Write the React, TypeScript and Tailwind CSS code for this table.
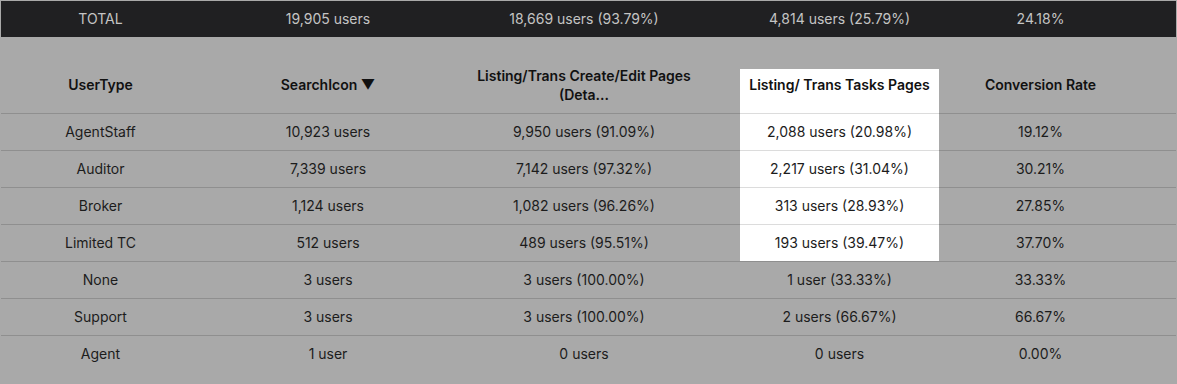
import React from "react";

type Row = {
  userType: string;
  search: string;
  listing: string;
  tasks: string;
  rate: string;
};

const rows: Array<Row> = [
  { userType: "AgentStaff", search: "10,923 users", listing: "9,950 users (91.09%)", tasks: "2,088 users (20.98%)", rate: "19.12%" },
  { userType: "Auditor", search: "7,339 users", listing: "7,142 users (97.32%)", tasks: "2,217 users (31.04%)", rate: "30.21%" },
  { userType: "Broker", search: "1,124 users", listing: "1,082 users (96.26%)", tasks: "313 users (28.93%)", rate: "27.85%" },
  { userType: "Limited TC", search: "512 users", listing: "489 users (95.51%)", tasks: "193 users (39.47%)", rate: "37.70%" },
  { userType: "None", search: "3 users", listing: "3 users (100.00%)", tasks: "1 user (33.33%)", rate: "33.33%" },
  { userType: "Support", search: "3 users", listing: "3 users (100.00%)", tasks: "2 users (66.67%)", rate: "66.67%" },
  { userType: "Agent", search: "1 user", listing: "0 users", tasks: "0 users", rate: "0.00%" },
];

// columns: 200 / 256 / 284 / 199 / rest
const cols = "grid grid-cols-[199px_256px_284px_199px_1fr]";

const App = () => {
  return (
    <div
      className="w-[1177px] h-[384px] bg-[#a9a9a9] px-px pt-px text-sm text-[#1c1c1c]"
      style={{ fontFamily: "Inter, 'Noto Sans', sans-serif" }}
    >
      {/* total bar */}
      <div className={`${cols} h-[36px] items-center bg-[#202022] text-[#c4c4c4]`}>
        <div className="text-center">TOTAL</div>
        <div className="text-center">19,905 users</div>
        <div className="text-center pr-[28px]">18,669 users (93.79%)</div>
        <div className="text-center">4,814 users (25.79%)</div>
        <div className="text-center pr-[34px]">24.18%</div>
      </div>

      {/* header */}
      <div className={`${cols} h-[76px] font-semibold text-[14px] text-[#111]`}>
        <div className="flex items-center justify-center pt-[20px]">UserType</div>
        <div className="flex items-center justify-center pt-[20px]">SearchIcon ▼</div>
        <div className="flex items-center justify-center pt-[20px] pr-[28px] text-center leading-[19px]">
          Listing/Trans Create/Edit Pages
          <br />
          (Deta...
        </div>
        <div className="flex flex-col pt-[32px]">
          <div className="flex-1 bg-white pt-[6px] text-center leading-5">
            Listing/ Trans Tasks Pages
          </div>
        </div>
        <div className="flex items-center justify-center pt-[20px] pr-[34px]">Conversion Rate</div>
      </div>

      {/* body */}
      {rows.map((row, i) => (
        <div key={row.userType} className={`${cols} h-[37px] border-t border-[#8f8f8f]`}>
          <div className="flex items-center justify-center">{row.userType}</div>
          <div className="flex items-center justify-center">{row.search}</div>
          <div className="flex items-center justify-center pr-[28px]">{row.listing}</div>
          {i < 4 ? (
            <div className="-mt-px flex items-center justify-center bg-white border-t border-[#dcdcdc]">
              {row.tasks}
            </div>
          ) : (
            <div className="flex items-center justify-center">{row.tasks}</div>
          )}
          <div className="flex items-center justify-center pr-[34px]">{row.rate}</div>
        </div>
      ))}
    </div>
  );
};

export default App;
